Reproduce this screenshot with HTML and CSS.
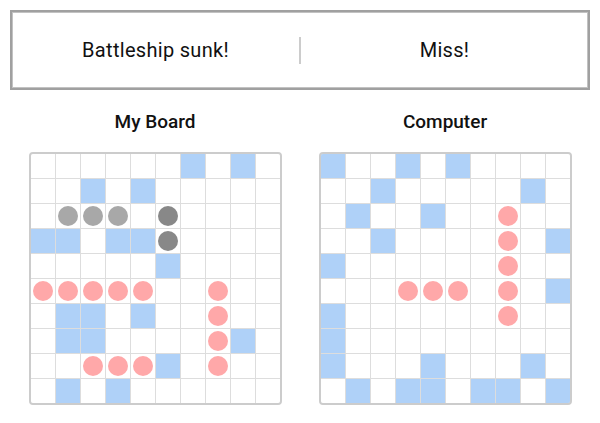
FILE: index.html
```html
<!DOCTYPE html>
<html>
<head>
<meta charset="utf-8">
<link rel="stylesheet" href="styles.css">
</head>
<body>
<div class="page">
  <div class="status">
    <div class="status-half">Battleship sunk!</div>
    <div class="divider"></div>
    <div class="status-half">Miss!</div>
  </div>
  <div class="boards">
    <div class="board-col">
      <div class="title">My Board</div>
      <div class="board">
        <div class="c"></div><div class="c"></div><div class="c"></div><div class="c"></div><div class="c"></div><div class="c"></div><div class="c s"></div><div class="c"></div><div class="c s"></div><div class="c"></div>
        <div class="c"></div><div class="c"></div><div class="c s"></div><div class="c"></div><div class="c s"></div><div class="c"></div><div class="c"></div><div class="c"></div><div class="c"></div><div class="c"></div>
        <div class="c"></div><div class="c m"></div><div class="c m"></div><div class="c m"></div><div class="c"></div><div class="c k"></div><div class="c"></div><div class="c"></div><div class="c"></div><div class="c"></div>
        <div class="c s"></div><div class="c s"></div><div class="c"></div><div class="c s"></div><div class="c s"></div><div class="c k"></div><div class="c"></div><div class="c"></div><div class="c"></div><div class="c"></div>
        <div class="c"></div><div class="c"></div><div class="c"></div><div class="c"></div><div class="c"></div><div class="c s"></div><div class="c"></div><div class="c"></div><div class="c"></div><div class="c"></div>
        <div class="c h"></div><div class="c h"></div><div class="c h"></div><div class="c h"></div><div class="c h"></div><div class="c"></div><div class="c"></div><div class="c h"></div><div class="c"></div><div class="c"></div>
        <div class="c"></div><div class="c s"></div><div class="c s"></div><div class="c"></div><div class="c s"></div><div class="c"></div><div class="c"></div><div class="c h"></div><div class="c"></div><div class="c"></div>
        <div class="c"></div><div class="c s"></div><div class="c s"></div><div class="c"></div><div class="c"></div><div class="c"></div><div class="c"></div><div class="c h"></div><div class="c s"></div><div class="c"></div>
        <div class="c"></div><div class="c"></div><div class="c h"></div><div class="c h"></div><div class="c h"></div><div class="c s"></div><div class="c"></div><div class="c h"></div><div class="c"></div><div class="c"></div>
        <div class="c"></div><div class="c s"></div><div class="c"></div><div class="c s"></div><div class="c"></div><div class="c"></div><div class="c"></div><div class="c"></div><div class="c"></div><div class="c"></div>
      </div>
    </div>
    <div class="board-col">
      <div class="title">Computer</div>
      <div class="board">
        <div class="c s"></div><div class="c"></div><div class="c"></div><div class="c s"></div><div class="c"></div><div class="c s"></div><div class="c"></div><div class="c"></div><div class="c"></div><div class="c"></div>
        <div class="c"></div><div class="c"></div><div class="c s"></div><div class="c"></div><div class="c"></div><div class="c"></div><div class="c"></div><div class="c"></div><div class="c s"></div><div class="c"></div>
        <div class="c"></div><div class="c s"></div><div class="c"></div><div class="c"></div><div class="c s"></div><div class="c"></div><div class="c"></div><div class="c h"></div><div class="c"></div><div class="c"></div>
        <div class="c"></div><div class="c"></div><div class="c s"></div><div class="c"></div><div class="c"></div><div class="c"></div><div class="c"></div><div class="c h"></div><div class="c"></div><div class="c s"></div>
        <div class="c s"></div><div class="c"></div><div class="c"></div><div class="c"></div><div class="c"></div><div class="c"></div><div class="c"></div><div class="c h"></div><div class="c"></div><div class="c"></div>
        <div class="c"></div><div class="c"></div><div class="c"></div><div class="c h"></div><div class="c h"></div><div class="c h"></div><div class="c"></div><div class="c h"></div><div class="c"></div><div class="c s"></div>
        <div class="c s"></div><div class="c"></div><div class="c"></div><div class="c"></div><div class="c"></div><div class="c"></div><div class="c"></div><div class="c h"></div><div class="c"></div><div class="c"></div>
        <div class="c s"></div><div class="c"></div><div class="c"></div><div class="c"></div><div class="c"></div><div class="c"></div><div class="c"></div><div class="c"></div><div class="c"></div><div class="c"></div>
        <div class="c s"></div><div class="c"></div><div class="c"></div><div class="c"></div><div class="c s"></div><div class="c"></div><div class="c"></div><div class="c"></div><div class="c s"></div><div class="c"></div>
        <div class="c"></div><div class="c s"></div><div class="c"></div><div class="c s"></div><div class="c s"></div><div class="c"></div><div class="c s"></div><div class="c s"></div><div class="c"></div><div class="c s"></div>
      </div>
    </div>
  </div>
</div>
</body>
</html>
```

FILE: styles.css
```css
html, body {
  margin: 0;
  padding: 0;
  background: #fff;
}

body {
  font-family: Roboto, "Liberation Sans", sans-serif;
  color: #111;
}

.page {
  padding: 10px;
}

.status {
  height: 80px;
  box-sizing: border-box;
  border: 2px solid #a0a0a0;
  box-shadow: inset 0 0 0 1px #c2c2c2;
  display: flex;
  align-items: center;
}

.status-half {
  flex: 1;
  text-align: center;
  font-size: 20px;
  letter-spacing: 0.3px;
}

.divider {
  width: 2px;
  height: 27px;
  background: #cccccc;
}

.boards {
  display: grid;
  grid-template-columns: 1fr 1fr;
  margin-top: 20px;
}

.board-col {
  display: flex;
  flex-direction: column;
  align-items: center;
}

.title {
  font-size: 19px;
  font-weight: 500;
  line-height: 23px;
  margin-bottom: 19px;
}

.board {
  display: grid;
  grid-template-columns: repeat(10, 24px);
  grid-auto-rows: 24px;
  gap: 1px;
  background: #dddddd;
  border: 2px solid #cccccc;
  border-radius: 4px;
  overflow: hidden;
}

.c {
  background: #fff;
  display: flex;
  align-items: center;
  justify-content: center;
}

.c.s {
  background: #afd1f8;
}

.c.h::after,
.c.m::after,
.c.k::after {
  content: "";
  width: 20px;
  height: 20px;
  border-radius: 50%;
}

.c.h::after {
  background: #ffa8a9;
}

.c.m::after {
  background: #a8a8a8;
}

.c.k::after {
  background: #888888;
}
```
